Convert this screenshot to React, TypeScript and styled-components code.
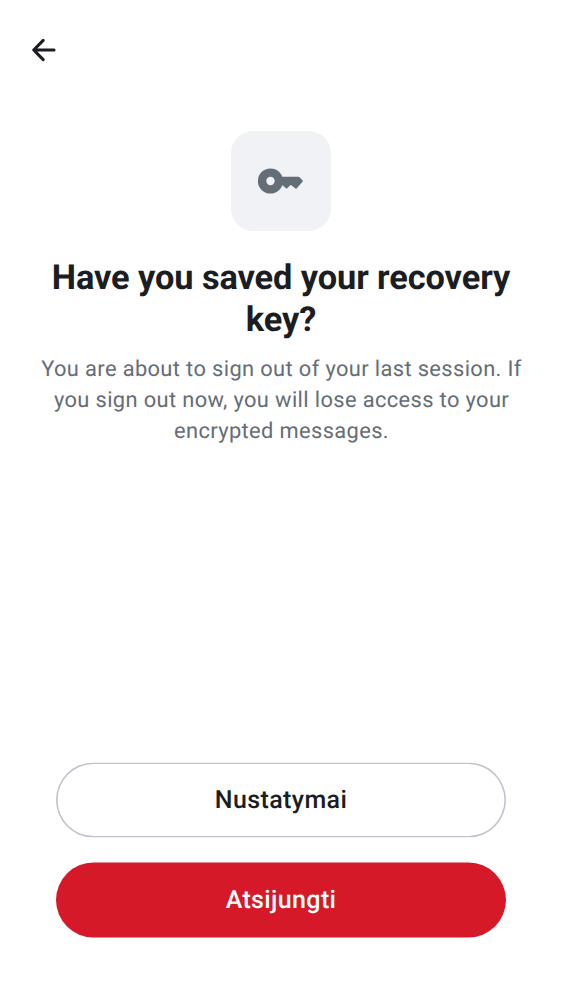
import React from 'react';
import styled, { createGlobalStyle } from 'styled-components';

const GlobalStyle = createGlobalStyle`
  * { box-sizing: border-box; }
  body {
    margin: 0;
    background: #fff;
    font-family: Roboto, sans-serif;
    color: #1b1d22;
    text-rendering: geometricPrecision;
  }
`;

const Screen = styled.main`
  display: flex;
  flex-direction: column;
  height: 1000px;
  padding: 0 31px 62px;
  background: #fff;
`;

const TopBar = styled.header`
  display: flex;
  align-items: center;
  height: 100px;
`;

const BackButton = styled.button`
  display: flex;
  padding: 0;
  border: 0;
  background: none;
  color: #1b1d22;
`;

const Content = styled.section`
  flex: 1;
  display: flex;
  flex-direction: column;
  align-items: center;
  padding-top: 31px;
  text-align: center;
`;

const IconTile = styled.div`
  display: flex;
  align-items: center;
  justify-content: center;
  width: 100px;
  height: 100px;
  border-radius: 22px;
  background: #f0f2f5;
`;

const Title = styled.h1`
  margin: 26px 0 0;
  font-size: 34.375px;
  line-height: 42px;
  font-weight: 700;
  letter-spacing: -0.09px;
`;

const Message = styled.p`
  margin: 13px 0 0;
  padding-left: 1px;
  font-size: 21.875px;
  line-height: 31px;
  letter-spacing: 0.37px;
  color: #656d77;
`;

const Actions = styled.footer`
  display: flex;
  flex-direction: column;
  gap: 25px;
  padding: 0 25px;
`;

const ActionButton = styled.button<{ $danger?: boolean }>`
  height: 75px;
  padding: 0;
  border: 0;
  border-radius: 37.5px;
  box-shadow: ${p => (p.$danger ? 'none' : 'inset 0 0 0 1.5625px #bdc3cc')};
  background: ${p => (p.$danger ? '#d51928' : '#fff')};
  color: ${p => (p.$danger ? '#fff' : '#1b1d22')};
  font: 500 25px/37px Roboto, sans-serif;
  letter-spacing: 0.38px;
  text-rendering: geometricPrecision;
  transform: translateY(-0.5px);
`;

export default function App() {
  return (
    <>
      <GlobalStyle />
      <Screen>
        <TopBar>
          <BackButton aria-label="Back">
            <svg
              width="25"
              height="24"
              viewBox="0 0 25 24"
              fill="none"
              stroke="currentColor"
              strokeWidth="3.1"
              strokeLinecap="round"
              strokeLinejoin="round"
            >
              <path d="M12.2 2.4 2.7 12l9.5 9.6M3 12h20" />
            </svg>
          </BackButton>
        </TopBar>
        <Content>
          <IconTile>
            <svg width="50" height="50" viewBox="256 156 50 50" fill="#656d77">
              <path
                fillRule="evenodd"
                d="M270.5 168.4c5.4 0 10.1 3.4 11.9 8.4H298.4q.7 0 1.2.5l3.1 3.1q.6.6 0 1.2l-5.9 6.7q-.6.6-1.3.1l-4.2-3.1q-.5-.4-1 0l-3.1 3q-.6.5-1.2 0l-3.6-3.1h-.1c-1.8 5-6.4 8.4-11.8 8.4a12.6 12.6 0 1 1 0-25.2ZM270.5 176.8a4.2 4.2 0 1 0 0 8.4 4.2 4.2 0 0 0 0-8.4Z"
              />
            </svg>
          </IconTile>
          <Title>Have you saved your recovery key?</Title>
          <Message>You are about to sign out of your last session. If you sign out now, you will lose access to your encrypted messages.</Message>
        </Content>
        <Actions>
          <ActionButton>Nustatymai</ActionButton>
          <ActionButton $danger>Atsijungti</ActionButton>
        </Actions>
      </Screen>
    </>
  );
}
